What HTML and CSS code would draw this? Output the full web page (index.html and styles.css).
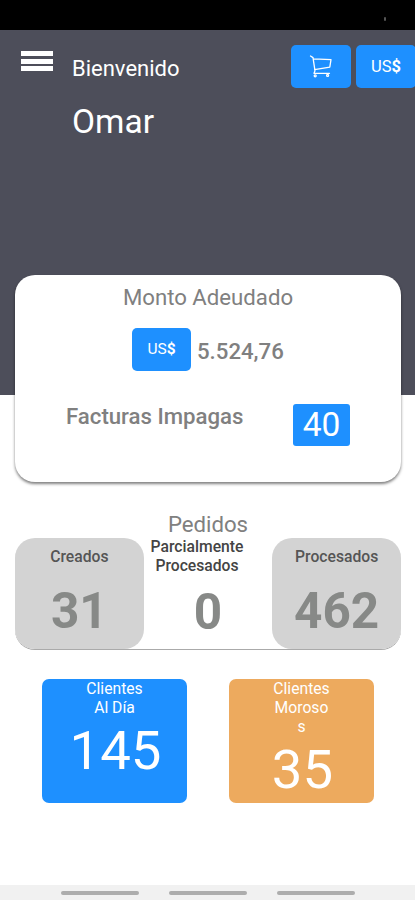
FILE: index.html
```html
<!DOCTYPE html>
<html lang="es">

<head>
    <meta charset="UTF-8">
    <meta name="viewport" content="width=device-width, initial-scale=1.0">
    <title>Bienvenido</title>
    <link rel="stylesheet" href="styles.css">
</head>

<body>
    <div class="status-bar"><span class="status-dot"></span></div>

    <header class="hero">
        <button class="menu" aria-label="Menú">
            <span></span>
            <span></span>
            <span></span>
        </button>
        <div class="welcome">
            <p>Bienvenido</p>
            <h1>Omar</h1>
        </div>
        <div class="actions">
            <button class="btn" aria-label="Carrito">
                <svg width="24" height="24" viewBox="0 0 24 24" fill="none" stroke="currentColor" stroke-width="1.3" stroke-linecap="round" stroke-linejoin="round">
                    <path d="M1.5 1 4 2.6l2 13.2M4.2 3.8 22 4.6l-1.2 7.6-15.2 2.4M6 15.8 5 18.3h15.5" />
                    <circle cx="6.2" cy="20.8" r="1" />
                    <circle cx="18.6" cy="20.4" r="1" />
                </svg>
            </button>
            <button class="btn">US<b>$</b></button>
        </div>
    </header>

    <main>
        <section class="card">
            <h2>Monto Adeudado</h2>
            <div class="amount">
                <button class="btn btn-small">US<b>$</b></button>
                <strong>5.524,76</strong>
            </div>
            <div class="unpaid">
                <strong>Facturas Impagas</strong>
                <span class="count">40</span>
            </div>
        </section>

        <section class="orders">
            <h2>Pedidos</h2>
            <div class="order-list">
                <div class="order gray">
                    <h3>Creados</h3>
                    <p>31</p>
                </div>
                <div class="order partial">
                    <h3>Parcialmente Procesados</h3>
                    <p>0</p>
                </div>
                <div class="order gray">
                    <h3>Procesados</h3>
                    <p>462</p>
                </div>
            </div>
        </section>

        <section class="clients">
            <div class="client blue">
                <h3>Clientes<br>Al Día</h3>
                <p>145</p>
            </div>
            <div class="client orange">
                <h3>Clientes<br>Moroso<br>s</h3>
                <p>35</p>
            </div>
        </section>
    </main>

    <!-- Android navigation -->
    <footer class="nav-bar">
        <span></span>
        <span></span>
        <span></span>
    </footer>
</body>

</html>
```

FILE: styles.css
```css
:root {
    --dark: #4d4e5a;
    --blue: #1e90ff;
    --orange: #edaa5e;
    --gray: #d3d3d3;
    --text: #808080;
}

* {
    box-sizing: border-box;
    margin: 0;
    padding: 0;
}

body {
    display: flex;
    flex-direction: column;
    height: 900px;
    overflow: hidden;
    font-family: Roboto, sans-serif;
    background-color: #fff;
    color: var(--text);
}

button {
    border: none;
    font-family: inherit;
}

.status-bar {
    display: flex;
    justify-content: flex-end;
    height: 30px;
    padding: 17px 29px 0 0;
    background-color: #000;
}

.status-dot {
    width: 2px;
    height: 4px;
    border-radius: 1px;
    background-color: #555;
}

/* Header */
.hero {
    display: flex;
    flex-shrink: 0;
    height: 365px;
    padding-left: 21px;
    background-color: var(--dark);
    color: #fff;
}

.menu {
    display: flex;
    flex-direction: column;
    gap: 2.5px;
    width: 32px;
    height: 20px;
    margin-top: 21px;
    background: none;
}

.menu span {
    width: 32px;
    height: 5px;
    background-color: #fff;
}

.welcome {
    margin: 25px 0 0 19px;
    font-size: 22px;
    line-height: 28px;
}

.welcome h1 {
    margin-top: 19px;
    font-size: 33.5px;
    font-weight: 400;
    line-height: 40px;
}

.actions {
    display: flex;
    gap: 5px;
    margin: 15px -1px 0 auto;
}

.btn {
    display: flex;
    align-items: center;
    justify-content: center;
    width: 60px;
    height: 43px;
    border-radius: 5px;
    background-color: var(--blue);
    color: #fff;
    font-size: 16.5px;
}

.btn-small {
    width: 59px;
    font-size: 15.5px;
    padding-bottom: 2px;
}

/* Debt card */
.card {
    height: 207px;
    margin: -120px 14px 0 15px;
    padding-top: 9px;
    border-radius: 20px;
    background-color: #fff;
    box-shadow: 0 2px 3px rgba(0, 0, 0, 0.5);
}

h2 {
    height: 28px;
    font-size: 22.2px;
    font-weight: 400;
    line-height: 26px;
    text-align: center;
}

strong {
    font-size: 22.2px;
    font-weight: 500;
}

.amount {
    display: flex;
    align-items: center;
    gap: 6px;
    margin: 16px 0 0 117px;
}

.amount strong {
    padding-top: 3px;
}

.unpaid {
    display: flex;
    justify-content: space-between;
    margin: 33px 51px 0 51px;
}

.unpaid strong {
    line-height: 25px;
}

.count {
    width: 57px;
    height: 42px;
    border-radius: 3px;
    background-color: var(--blue);
    color: #fff;
    font-size: 33.5px;
    line-height: 41px;
    text-align: center;
}

/* Orders */
.orders {
    margin: 29px 14px 0 15px;
}

.orders h2 {
    height: 27px;
}

.order-list {
    display: flex;
    height: 111px;
    border-radius: 20px;
    box-shadow: 0 1px 0 #aaa;
}

.order {
    width: 33.333%;
    padding-top: 10px;
    border-radius: 20px;
    text-align: center;
}

.gray {
    background-color: var(--gray);
}

.order h3 {
    height: 36px;
    font-size: 15.7px;
    font-weight: 500;
    line-height: 18.6px;
    color: #555;
}

.order p {
    font-size: 49.5px;
    font-weight: 700;
    line-height: 54px;
    color: #878987;
}

.partial {
    padding-top: 0;
}

.partial h3 {
    height: 47px;
    margin: 0 15px 0 -7px;
    color: #444;
}

/* Clients */
.clients {
    display: flex;
    gap: 42px;
    margin: 30px 0 0 42px;
}

.client {
    width: 145px;
    height: 124px;
    border-radius: 7px;
    color: #fff;
    text-align: center;
}

.blue {
    background-color: var(--blue);
}

.orange {
    background-color: var(--orange);
}

.client h3 {
    font-size: 15.7px;
    font-weight: 400;
    line-height: 19px;
}

.client p {
    padding-left: 2px;
    font-size: 54.5px;
    line-height: 67px;
}

/* Bottom bar */
.nav-bar {
    display: flex;
    justify-content: center;
    gap: 30px;
    height: 15px;
    margin-top: auto;
    padding-top: 6px;
    background-color: #f1f1f1;
}

.nav-bar span {
    width: 78px;
    height: 4px;
    border-radius: 2px;
    background-color: #adadad;
}
```
